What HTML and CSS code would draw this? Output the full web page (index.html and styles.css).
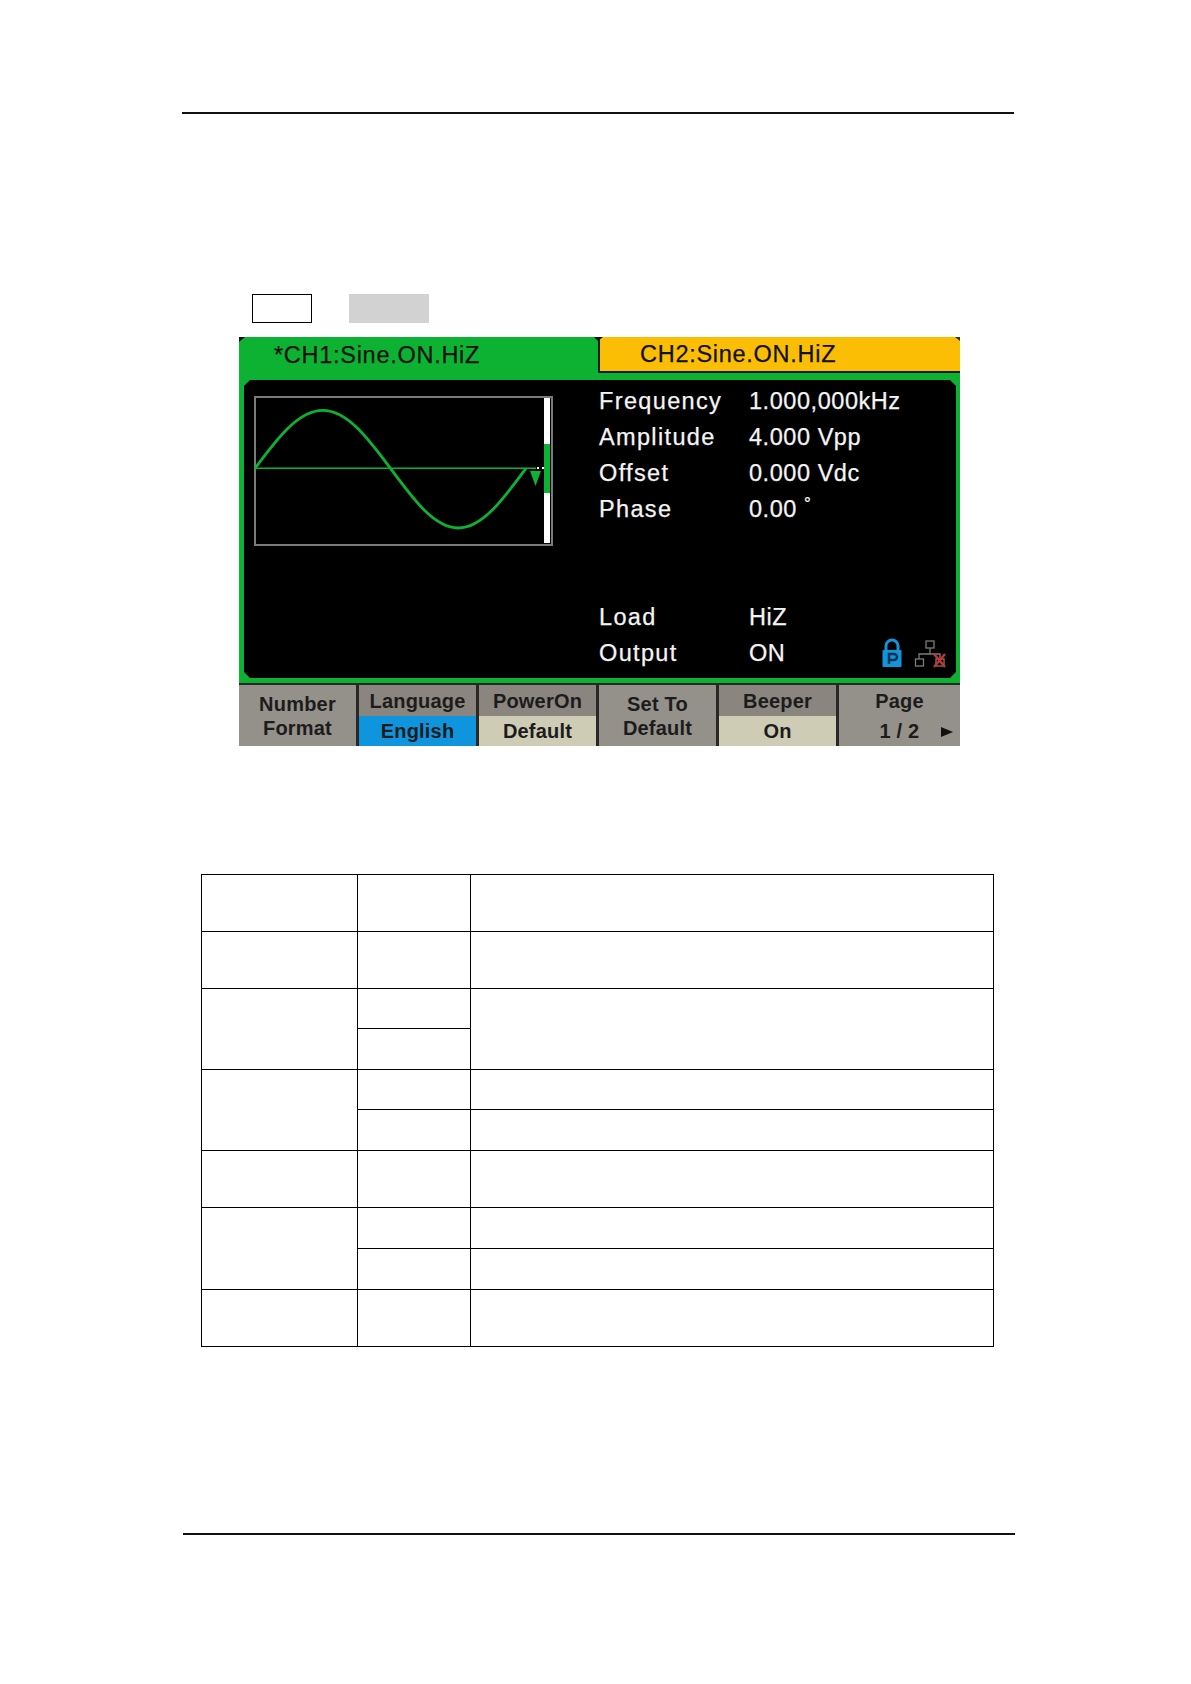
FILE: index.html
```html
<!DOCTYPE html>
<html lang="en">
<head>
<meta charset="utf-8">
<title>Utility settings</title>
<link rel="stylesheet" href="styles.css">
</head>
<body>
<div class="page">
  <hr class="rule rule-top">
  <div class="keys"><span class="key-outline"></span><span class="key-grey"></span></div>
  <div class="screen">
    <div class="tabs">
      <div class="tab tab-ch1">*CH1:Sine.ON.HiZ</div>
      <div class="tab tab-ch2"><span class="tab-ch2-in">CH2:Sine.ON.HiZ</span></div>
    </div>
    <div class="display">
      <div class="scope">
        <svg class="wave" width="299" height="150" viewBox="0 0 299 150">
          <rect x="1" y="1" width="297" height="148" fill="none" stroke="#7a7a7a" stroke-width="2"/>
          <rect x="290" y="2" width="6" height="145" fill="#fff"/>
          <rect x="290" y="48" width="6" height="49" fill="#0db233"/>
          <path d="M2 72.300H282" stroke="#0db233" stroke-width="1.500" fill="none"/>
          <path d="M1 72.300C23.100 42.600 44.200 14.300 68.750 14.300C93.300 14.300 114.400 42.600 136.500 72.300C158.600 102 179.700 132 204.250 132C228.800 132 249.900 102 272 72.300" stroke="#0db233" stroke-width="2.800" fill="none"/>
          <path d="M276 75H287L281.500 90Z" fill="#0db233"/>
          <rect x="283" y="71" width="2" height="2" fill="#fff"/>
          <rect x="288" y="71" width="2" height="2" fill="#fff"/>
        </svg>
      </div>
      <div class="readout">
        <div class="params">
          <div class="param"><span class="name">Frequency</span><span class="val">1.000,000kHz</span></div>
          <div class="param"><span class="name">Amplitude</span><span class="val">4.000 Vpp</span></div>
          <div class="param"><span class="name">Offset</span><span class="val">0.000 Vdc</span></div>
          <div class="param"><span class="name">Phase</span><span class="val">0.00 <sup class="deg">°</sup></span></div>
        </div>
        <div class="params params-low">
          <div class="param"><span class="name">Load</span><span class="val">HiZ</span></div>
          <div class="param"><span class="name">Output</span><span class="val">ON</span></div>
          <div class="status">
            <svg width="22" height="30" viewBox="0 0 22 30">
              <path d="M5 13V8a6 6 0 0 1 12 0v5" fill="none" stroke="#1195dc" stroke-width="3"/>
              <rect x="1.500" y="12" width="19" height="17" rx="1" fill="#1195dc"/>
              <path d="M8 26V16h5a3 3 0 0 1 0 6H8" fill="none" stroke="#06324f" stroke-width="2.500"/>
            </svg>
            <svg width="32" height="28" viewBox="0 0 32 28">
              <path d="M16 8V14M5 19V14H26V19" fill="none" stroke="#7c7c7c" stroke-width="1.300"/>
              <rect x="12" y="1" width="8" height="7" fill="none" stroke="#7c7c7c" stroke-width="1.300"/>
              <rect x="1.500" y="19" width="8" height="7" fill="none" stroke="#7c7c7c" stroke-width="1.300"/>
              <rect x="22" y="19" width="8" height="7" fill="none" stroke="#7c7c7c" stroke-width="1.300"/>
              <path d="M20 14L31 27M31 14L20 27" stroke="#c9352c" stroke-width="2.400"/>
            </svg>
          </div>
        </div>
      </div>
    </div>
    <div class="softkeys">
      <div class="sk sk-plain"><span>Number</span><span>Format</span></div>
      <div class="sk"><span class="sk-head">Language</span><span class="sk-sel sk-blue">English</span></div>
      <div class="sk"><span class="sk-head">PowerOn</span><span class="sk-sel">Default</span></div>
      <div class="sk sk-plain"><span>Set To</span><span>Default</span></div>
      <div class="sk"><span class="sk-head">Beeper</span><span class="sk-sel">On</span></div>
      <div class="sk sk-page"><span class="sk-title">Page</span><span class="sk-count">1 / 2<i class="arrow"></i></span></div>
    </div>
  </div>
  <table class="grid">
    <colgroup><col class="c1"><col class="c2"><col class="c3"></colgroup>
    <tbody>
      <tr class="tall"><td></td><td></td><td></td></tr>
      <tr class="tall"><td></td><td></td><td></td></tr>
      <tr class="shorter"><td rowspan="2"></td><td></td><td rowspan="2"></td></tr>
      <tr class="short"><td></td></tr>
      <tr class="shorter"><td rowspan="2"></td><td></td><td></td></tr>
      <tr class="short"><td></td><td></td></tr>
      <tr class="tall"><td></td><td></td><td></td></tr>
      <tr class="short"><td rowspan="2"></td><td></td><td></td></tr>
      <tr class="short"><td></td><td></td></tr>
      <tr class="tall"><td></td><td></td><td></td></tr>
    </tbody>
  </table>
  <hr class="rule rule-bottom">
</div>
</body>
</html>
```
FILE: styles.css
```css
html, body { margin: 0; padding: 0; background: #fff; }
.page { width: 1191px; height: 1684px; padding-top: 112px; box-sizing: border-box; overflow: hidden; font-family: "Liberation Sans", Arial, sans-serif; }
.rule { margin: 0; border: 0; height: 2px; background: #111; }
.rule-top { width: 832px; margin-left: 182px; }
.rule-bottom { width: 832px; margin-left: 183px; margin-top: 186px; }
.keys { display: flex; margin: 180px 0 0 252px; height: 29px; gap: 37px; }
.key-outline { width: 58px; height: 27px; border: 1px solid #000; }
.key-grey { width: 80px; height: 29px; background: #d2d2d2; }
.screen { width: 721px; height: 409px; margin: 14px 0 0 239px; background: #0db233; display: flex; flex-direction: column; }
.tabs { display: flex; flex: 0 0 43px; }
.tab { font-size: 23.500px; line-height: 36px; color: #111; letter-spacing: .72px; -webkit-text-stroke: .25px #111; position: relative; }
.tab-ch1 { width: 359px; padding-left: 35px; box-sizing: border-box; }
.tab-ch1::before { content: ""; position: absolute; left: 0; top: 0; border-top: 5px solid #111; border-right: 6px solid transparent; }
.tab-ch2 { flex: 1; height: 36px; }
.tab-ch2::before { content: ""; position: absolute; left: -1px; top: 0; border-top: 4px solid #111; border-right: 5px solid transparent; border-left: 4px solid transparent; margin-left: -3px; }
.tab-ch2::after { content: ""; position: absolute; right: 0; top: 0; border-top: 4px solid #333; border-left: 5px solid transparent; }
.tab-ch2-in { display: block; height: 34px; padding-left: 40px; background: #fbbe05; border-left: 2px solid #1a1a1a; border-bottom: 2px solid #1a1a1a; line-height: 35px; }
.display { flex: 0 0 298px; margin: 0 4px 0 5px; background: #000; display: flex; clip-path: polygon(6px 0, calc(100% - 6px) 0, 100% 6px, 100% calc(100% - 6px), calc(100% - 6px) 100%, 6px 100%, 0 calc(100% - 6px), 0 6px); }
.scope { width: 355px; padding: 16px 0 0 10px; box-sizing: border-box; }
.wave { display: block; }
.readout { flex: 1; padding-top: 3px; color: #f4f4f4; font-size: 23.500px; -webkit-text-stroke: .25px #f4f4f4; position: relative; }
.params-low { margin-top: 72px; position: relative; }
.param { display: flex; height: 36px; line-height: 36px; letter-spacing: .55px; }
.name { width: 150px; letter-spacing: 1.350px; }
.deg { font-size: 17px; line-height: 0; vertical-align: 8px; }
.status { position: absolute; right: 10px; bottom: 3px; display: flex; align-items: flex-end; gap: 11px; -webkit-text-stroke: 0; }
.softkeys { flex: 1; margin-top: 5px; display: flex; gap: 3px; background: #2a2824; border-top: 2px solid #2a2824; color: #1c1c1c; font-weight: bold; font-size: 20px; letter-spacing: .2px; }
.sk { flex: 0 0 117px; display: flex; flex-direction: column; text-align: center; background: #94908a; }
.sk-head { height: 31px; line-height: 33px; background: #8a867f; }
.sk-sel { height: 30px; line-height: 30px; background: #cfccb6; }
.sk-blue { background: #0f94de; }
.sk-plain { justify-content: center; line-height: 24px; }
.sk-page { flex: 1; position: relative; }
.sk-title { height: 31px; line-height: 33px; }
.sk-count { height: 30px; line-height: 30px; }
.arrow { position: absolute; right: 7px; bottom: 9px; width: 0; height: 0; border-left: 12px solid #111; border-top: 5px solid transparent; border-bottom: 5px solid transparent; }
.grid { border-collapse: collapse; table-layout: fixed; width: 793px; margin: 128px 0 0 201px; }
.grid td { border: 1px solid #000; padding: 0; }
.c1 { width: 156px; }
.c2 { width: 113px; }
.tall td { height: 56px; }
.short td { height: 40px; }
.shorter td { height: 39px; }
```
